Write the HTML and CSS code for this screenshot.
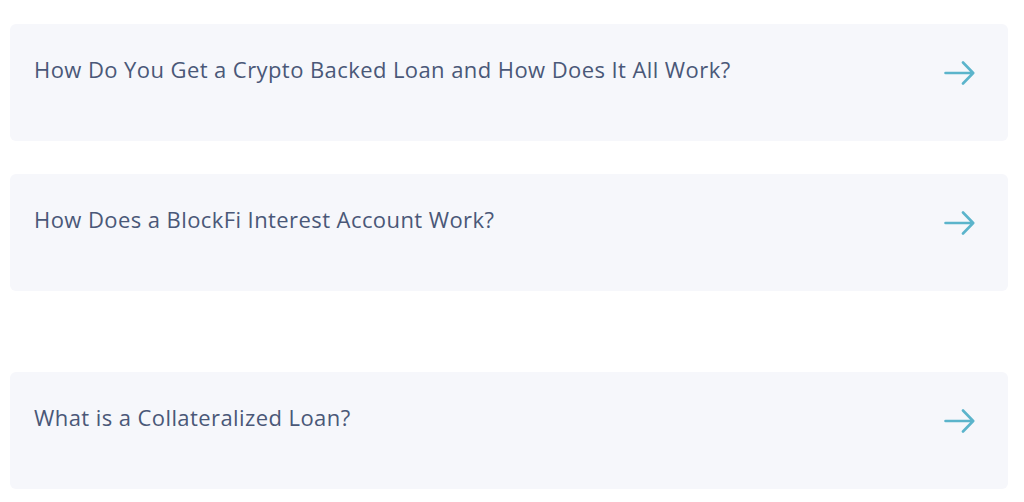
FILE: index.html
```html
<!DOCTYPE html>
<html lang="en">
<head>
<meta charset="utf-8">
<title>FAQ</title>
<link rel="stylesheet" href="styles.css">
</head>
<body>
<div class="list">
  <a class="card" href="#">
    <span class="q">How Do You Get a Crypto Backed Loan and How Does It All Work?</span>
    <svg class="arrow" width="32" height="24" viewBox="0 0 32 24" aria-hidden="true"><path d="M1.5 12H29M19 1.5L29.2 12L19 22.5" fill="none" stroke="#5bb4cb" stroke-width="2.6" stroke-linecap="round" stroke-linejoin="round"/></svg>
  </a>
  <a class="card" href="#">
    <span class="q">How Does a BlockFi Interest Account Work?</span>
    <svg class="arrow" width="32" height="24" viewBox="0 0 32 24" aria-hidden="true"><path d="M1.5 12H29M19 1.5L29.2 12L19 22.5" fill="none" stroke="#5bb4cb" stroke-width="2.6" stroke-linecap="round" stroke-linejoin="round"/></svg>
  </a>
  <a class="card card-far" href="#">
    <span class="q">What is a Collateralized Loan?</span>
    <svg class="arrow" width="32" height="24" viewBox="0 0 32 24" aria-hidden="true"><path d="M1.5 12H29M19 1.5L29.2 12L19 22.5" fill="none" stroke="#5bb4cb" stroke-width="2.6" stroke-linecap="round" stroke-linejoin="round"/></svg>
  </a>
</div>
</body>
</html>
```
FILE: styles.css
```css
html, body {
  margin: 0;
  padding: 0;
  background: #ffffff;
}
.list {
  display: flex;
  flex-direction: column;
  gap: 33px;
  padding: 24px 16px 0 10px;
}
.card {
  display: flex;
  justify-content: space-between;
  align-items: flex-start;
  height: 117px;
  box-sizing: border-box;
  padding: 30px 33px 0 24px;
  background: #f6f7fb;
  border-radius: 6px;
  text-decoration: none;
}
.card-far {
  margin-top: 48px;
}
.q {
  font-family: "Open Sans", "Noto Sans", sans-serif;
  font-size: 22px;
  line-height: 30px;
  letter-spacing: 0.42px;
  color: #4a5878;
}
.arrow {
  display: block;
  margin-top: 7px;
  margin-right: -1px;
}
```
